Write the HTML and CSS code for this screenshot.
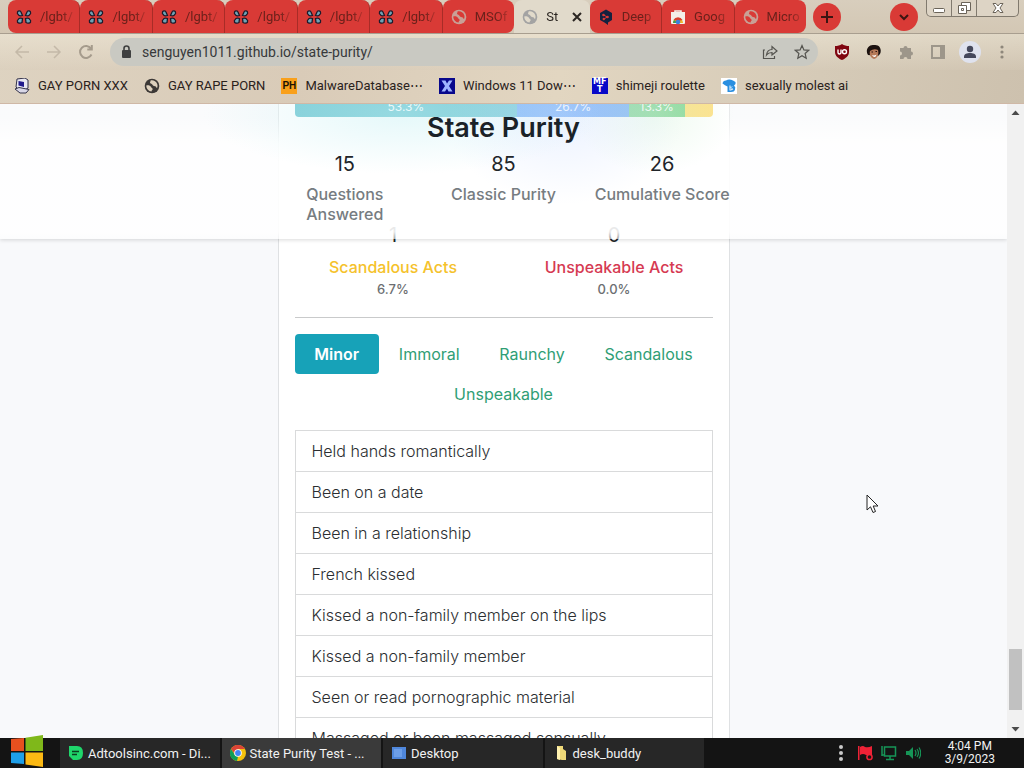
FILE: index.html
```html
<!DOCTYPE html>
<html lang="en">
<head>
<meta charset="utf-8">
<title>State Purity Test</title>
<link rel="stylesheet" href="styles.css">
</head>
<body>
<svg class="defs" aria-hidden="true">
  <symbol id="clover" viewBox="0 0 16 16">
    <g fill="#6fa3b5" stroke="#1d1a2b" stroke-width="1.300">
      <path d="M6.500 6.500Q3 7.500 2.200 5.500 1 4.800 1.500 3.500 1.300 2 3 2 4.500 1.500 5 3Z"/>
      <path d="M9.500 6.500Q13 7.500 13.800 5.500 15 4.800 14.500 3.500 14.700 2 13 2 11.500 1.500 11 3Z"/>
      <path d="M6.500 9.500Q3 8.500 2.200 10.500 1 11.200 1.500 12.500 1.300 14 3 14 4.500 14.500 6 13.500Z"/>
      <path d="M9.500 9.500Q13 8.500 13.800 10.500 15 11.200 14.500 12.500 14.700 14 13 14 11.500 14.500 10 13.500Z"/>
    </g>
  </symbol>
  <symbol id="globe" viewBox="0 0 16 16">
    <circle cx="8" cy="8" r="7.300" fill="currentColor"/>
    <path d="M2.300 7.500C4 7 6.500 7.500 7 9c.3 1 1.800.8 1.700 2.200-.2 1-1.200 1-1.200 2.300C4.500 13.200 2.300 10.800 2.300 7.500ZM6.500 2.500C9 1.800 12 3 13.200 6c.6 1.700.3 3-.2 4-.8-.2-.8-1.700-2-1.800-1.500 0-2-.7-2.700-1.700C7.800 5.500 6 5.700 6 4.500c0-.8.800-1 .5-2Z" fill="var(--land)"/>
  </symbol>
</svg>

<div class="chrome">
  <div class="strip">
    <div class="tabs">
      <button class="tab first"><svg class="ico"><use href="#clover"/></svg><span>/lgbt/</span></button>
      <button class="tab"><svg class="ico"><use href="#clover"/></svg><span>/lgbt/</span></button>
      <button class="tab"><svg class="ico"><use href="#clover"/></svg><span>/lgbt/</span></button>
      <button class="tab"><svg class="ico"><use href="#clover"/></svg><span>/lgbt/</span></button>
      <button class="tab"><svg class="ico"><use href="#clover"/></svg><span>/lgbt/</span></button>
      <button class="tab"><svg class="ico"><use href="#clover"/></svg><span>/lgbt/</span></button>
      <button class="tab last"><svg class="ico globe-red"><use href="#globe"/></svg><span>MSOf</span></button>
      <button class="tab active"><svg class="ico globe-light"><use href="#globe"/></svg><span>St</span><svg class="close" viewBox="0 0 10 10"><path d="M1 1l8 8M9 1L1 9" stroke="#2b2622" stroke-width="2"/></svg></button>
      <button class="tab first"><svg class="ico" viewBox="0 0 16 16"><path d="M8 .5l6 3.500v7l-4 2.500V16l-3.500-2.500L2 11V4Z" fill="#16213f"/><circle cx="5.500" cy="6" r="1.300" fill="#d93a36"/><circle cx="9.500" cy="8" r="1.300" fill="#d93a36"/><circle cx="5.800" cy="10" r="1.200" fill="#d93a36"/><path d="M5.500 6l4 2-3.700 2" stroke="#d93a36" fill="none"/></svg><span>Deep</span></button>
      <button class="tab"><svg class="ico" viewBox="0 0 16 16"><path d="M1 3h14v11q0 1-1 1H2q-1 0-1-1Z" fill="#f3efe9"/><path d="M5 4V2h6v2" fill="none" stroke="#f3efe9" stroke-width="1.600"/><path d="M3 14a5 5 0 0 1 10 0Z" fill="#f0b429"/><path d="M3.500 11A5 5 0 0 1 12.500 11L8 12Z" fill="#d9402f"/><path d="M3 14a5 5 0 0 1 1-3l4 3Z" fill="#3a9b56"/><circle cx="8" cy="13" r="2.300" fill="#3f7ddb"/></svg><span>Goog</span></button>
      <button class="tab last"><svg class="ico globe-red"><use href="#globe"/></svg><span>Micro</span></button>
    </div>
    <button class="round" aria-label="New tab"><svg viewBox="0 0 28 28"><path d="M14 8v12M8 14h12" stroke="#3c1512" stroke-width="2"/></svg></button>
    <button class="round search" aria-label="Search tabs"><svg viewBox="0 0 28 28"><path d="M10 12l4 4 4-4" stroke="#3c1512" stroke-width="2" fill="none"/></svg></button>
    <div class="winctl">
      <button aria-label="Minimize"><svg viewBox="0 0 24 16"><rect x="6.500" y="8.500" width="11" height="4" rx="1" fill="#fff" stroke="#6b6459"/></svg></button>
      <button aria-label="Restore"><svg viewBox="0 0 24 16"><g fill="#fff" stroke="#6b6459"><path d="M9.500 2.500h9v8h-9Z"/><path d="M6.500 5.500h8v8h-8Z"/><path d="M9.500 8.500h2v2h-2Z"/></g></svg></button>
      <button class="wide" aria-label="Close"><svg viewBox="0 0 24 16"><path d="M7 3.500h3L12 6l2-2.500h3L14 8l3 4.500h-3L12 10l-2 2.500H7L10 8Z" fill="#fff" stroke="#6b6459"/></svg></button>
    </div>
  </div>

  <div class="toolbar">
    <div class="nav">
      <button aria-label="Back"><svg class="ico" viewBox="0 0 16 16"><path d="M15 8H2M8 2L2 8l6 6" class="faint"/></svg></button>
      <button aria-label="Forward"><svg class="ico" viewBox="0 0 16 16"><path d="M1 8h13M8 2l6 6-6 6" class="faint"/></svg></button>
      <button aria-label="Reload"><svg class="ico" viewBox="0 0 16 16"><path d="M13.500 10.500A6 6 0 1 1 13 4.500M13.800 1v4.500H9.300" class="mid"/></svg></button>
    </div>
    <div class="omnibox">
      <svg class="ico" viewBox="0 0 16 16"><rect x="4" y="6" width="9" height="8" rx="1" fill="#3f4040"/><path d="M6 7V4.500a2.500 2.500 0 0 1 5 0V7" fill="none" stroke="#3f4040" stroke-width="1.600"/></svg>
      <input type="text" aria-label="Address" value="senguyen1011.github.io/state-purity/">
      <button aria-label="Share"><svg class="ico" viewBox="0 0 16 16"><path d="M3 6H1.500v8.500h11V12M4.500 11c.5-4 2.500-5.500 5.500-5.500V2.500L15 7l-5 4V8.500c-2.500 0-4 .5-5.500 2.500Z" class="dark"/></svg></button>
      <button aria-label="Bookmark this tab"><svg class="ico" viewBox="0 0 16 16"><path d="M8 1.500l1.900 4.400 4.800.4-3.600 3.200 1.100 4.700L8 11.700l-4.200 2.500 1.100-4.700L1.300 6.300l4.800-.4Z" class="dark"/></svg></button>
    </div>
    <div class="exts">
      <button aria-label="uBlock Origin"><svg class="ico" viewBox="0 0 16 16"><path d="M8 0c2 1.500 4.500 2 7 2v6c0 4-3.500 6.500-7 8-3.500-1.500-7-4-7-8V2c2.500 0 5-.5 7-2Z" fill="#800610"/><path d="M4 5.500v3a1.500 1.500 0 0 0 3 0v-3" fill="none" stroke="#fff" stroke-width="1.400"/><circle cx="10.500" cy="7.800" r="2" fill="none" stroke="#fff" stroke-width="1.400"/></svg></button>
      <button aria-label="Extension"><svg class="ico" viewBox="0 0 16 16"><path d="M2 11C-1 7 2 0 8 1c6-1 8 5 6 9l-2 2Z" fill="#1c1210"/><path d="M4 7q4-3 8-1c1 4 0 8-4 9-3-1-5-4-4-8Z" fill="#b67a58"/><path d="M6 11q2.500 1 4.500-.5-.5 2.500-2 2.500T6 11Z" fill="#fff"/><path d="M5.500 8h1.500M9.500 7.500H11" stroke="#2b1510"/></svg></button>
      <button aria-label="Extensions"><svg class="ico" viewBox="0 0 16 16"><path d="M2 4h3.500a2 2 0 1 1 4 0H13v3.500a2 2 0 1 1 0 4V15H9.500a2 2 0 0 0-4 0H2v-3.500a2 2 0 0 0 0-4Z" fill="#9d968a"/></svg></button>
      <button aria-label="Side panel"><svg class="ico" viewBox="0 0 16 16"><rect x="2" y="2" width="12" height="12" fill="none" stroke="#9d968a" stroke-width="2"/><path d="M10 2h4v12h-4Z" fill="#9d968a"/></svg></button>
      <button class="profile" aria-label="Profile"><svg class="ico" viewBox="0 0 16 16"><circle cx="8" cy="5" r="3.200" fill="#45485c"/><path d="M2 14v-1.500c0-2.500 3-3.500 6-3.500s6 1 6 3.500V14Z" fill="#45485c"/></svg></button>
      <button aria-label="Menu"><svg class="ico" viewBox="0 0 16 16"><g fill="#8e877b"><circle cx="8" cy="3" r="1.600"/><circle cx="8" cy="8" r="1.600"/><circle cx="8" cy="13" r="1.600"/></g></svg></button>
    </div>
  </div>

  <nav class="bookmarks" aria-label="Bookmarks">
    <a href="#"><svg class="ico" viewBox="0 0 16 16"><path d="M3 1l8-1 3 2v8l-3 2H5L2 9Z" fill="#e9e8f2" stroke="#33324a"/><path d="M4.500 3L10 4v5L4.500 7.500Z" fill="#211a8c"/><path d="M1 11l4-1.500 10 2-3 3.500H6Z" fill="#d9d7e6" stroke="#33324a"/></svg>GAY PORN XXX</a>
    <a href="#"><svg class="ico globe-dark"><use href="#globe"/></svg>GAY RAPE PORN</a>
    <a href="#"><span class="ico ph">PH</span>MalwareDatabase⋯</a>
    <a href="#"><svg class="ico" viewBox="0 0 16 16"><path d="M0 0h16v16H0Z" fill="#08088c"/><path d="M2.500 2.500h4L8 5.500l2-3h3.500L10 8l3.500 5.500h-4L8 10.500l-2 3H2.500L6 8Z" fill="#9fb4ff"/></svg>Windows 11 Dow⋯</a>
    <a href="#"><span class="ico mft"><span>MF</span><span>T</span></span>shimeji roulette</a>
    <a href="#"><svg class="ico" viewBox="0 0 16 16"><path d="M0 0h16v16H0Z" fill="#fff"/><path d="M1.500 5.500Q2 2.500 5 2.500 8 .500 12 2.500L14.500 4V6L13 7.500Q15 9 14 11.500 13.500 14 10 14H6.500V8.500Q4 7.500 1.500 5.500Z" fill="#2a8fe0"/><path d="M9 7.500v5M11 8.500q-2 1 0 2t-1.500 1.500" stroke="#fff" fill="none"/></svg>sexually molest ai</a>
  </nav>
</div>

<div class="viewport">
  <main class="page">
    <header class="summary">
      <h1>State Purity</h1>
      <div class="totals">
        <div><b>15</b><span>Questions Answered</span></div>
        <div><b>85</b><span>Classic Purity</span></div>
        <div><b>26</b><span>Cumulative Score</span></div>
      </div>
    </header>
    <section class="card">
      <div class="progress"><span class="minor">53.3%</span><span class="immoral">26.7%</span><span class="raunchy">13.3%</span><span class="scandalous"></span></div>
      <div class="acts">
        <div><b>1</b><span class="yellow">Scandalous Acts</span><small>6.7%</small></div>
        <div><b>0</b><span class="red">Unspeakable Acts</span><small>0.0%</small></div>
      </div>
      <hr>
      <div class="pills">
        <button class="on">Minor</button><button>Immoral</button><button>Raunchy</button><button>Scandalous</button><button>Unspeakable</button>
      </div>
      <ul class="list">
        <li>Held hands romantically</li>
        <li>Been on a date</li>
        <li>Been in a relationship</li>
        <li>French kissed</li>
        <li>Kissed a non-family member on the lips</li>
        <li>Kissed a non-family member</li>
        <li>Seen or read pornographic material</li>
        <li>Massaged or been massaged sensually</li>
      </ul>
    </section>
  </main>
  <div class="scrollbar">
    <svg viewBox="0 0 17 17"><path d="M4.500 11L8.500 6.500 12.500 11Z" fill="#4a4a4a"/></svg>
    <div class="track"><div class="thumb"></div></div>
    <svg viewBox="0 0 17 17"><path d="M4.500 6L8.500 10.500 12.500 6Z" fill="#4a4a4a"/></svg>
  </div>
</div>

<footer class="taskbar">
  <button class="start" aria-label="Start"><svg viewBox="0 0 34 32"><path d="M1 4l13-1v13H1Z" fill="#e8501f"/><path d="M15.500 2.800L33 0v16H15.500Z" fill="#7fb81a"/><path d="M1 17.500h13V29L1 28Z" fill="#1f9fe8"/><path d="M15.500 17.500H33V32l-17.500-2.500Z" fill="#fcb913"/></svg></button>
  <div class="tasks">
    <button><svg class="ico" viewBox="0 0 16 16"><path d="M1 1h8q6 0 6 7t-6 7H5l-4-4Z" fill="#1fd66b"/><path d="M4 6.500h7M4 9.500h5" stroke="#0c3f20" stroke-width="1.500"/></svg>Adtoolsinc.com - Di...</button>
    <button class="current"><svg class="ico" viewBox="0 0 16 16"><circle cx="8" cy="8" r="8" fill="#f4c20d"/><path d="M1 4a8 8 0 0 1 14 0H8L5 9Z" fill="#db4437"/><path d="M1 4l4 6 3 1.500L7 16A8 8 0 0 1 1 4Z" fill="#0f9d58"/><circle cx="8" cy="8" r="3.800" fill="#fff"/><circle cx="8" cy="8" r="2.900" fill="#4285f4"/></svg>State Purity Test - ...</button>
    <button><svg class="ico" viewBox="0 0 16 16"><path d="M1 2h14v12H1Z" fill="#4f87dc"/><path d="M3 4h8v8H3Z" fill="#6c9ee8"/></svg>Desktop</button>
    <button><svg class="ico" viewBox="0 0 16 16"><path d="M4 1h6v3l3 2v9H9l-5-1Z" fill="#efd978"/><path d="M4 1l3 2v12l-3-1Z" fill="#fff2b0"/></svg>desk_buddy</button>
  </div>
  <div class="tray">
    <svg class="ico" viewBox="0 0 16 16"><g fill="#c9c9c9"><circle cx="8" cy="2" r="2"/><circle cx="8" cy="8" r="2"/><circle cx="8" cy="14" r="2"/></g></svg>
    <svg class="ico" viewBox="0 0 16 16"><path d="M1 1h1.500v14H1ZM3 2q3-2 5 0 3 1 7-1v9H9Q6 8 3 10Z" fill="#ee2236"/><circle cx="12.500" cy="12" r="2.600" fill="#171717" stroke="#ee2236" stroke-width="1.500"/></svg>
    <svg class="ico" viewBox="0 0 16 16"><path d="M3.500 2h11v9h-11ZM9 11v3M5 14.500h8M1 1v10M1 10h2" fill="none" stroke="#169557" stroke-width="1.500"/></svg>
    <svg class="ico" viewBox="0 0 16 16"><path d="M1 6h3l4-4v12l-4-4H1Z" fill="#169557"/><path d="M10 5q2 3 0 6M12 4q3 4 0 8M14 2.500q3.500 5.500 0 11" fill="none" stroke="#169557" stroke-width="1.200"/></svg>
    <div class="clock"><span>4:04 PM</span><span>3/9/2023</span></div>
  </div>
</footer>
<svg class="cursor" viewBox="0 0 13 20" aria-hidden="true"><path d="M1 1v15l3.500-3.200L7 18.500l2.500-1L7.200 12H12Z" fill="#fff" stroke="#222"/></svg>
</body>
</html>
```
FILE: styles.css
```css
* { box-sizing: border-box; }
body { margin: 0; height: 100vh; display: flex; flex-direction: column; overflow: hidden; font-family: Roboto, "Liberation Sans", sans-serif; font-size: 13px; color: #2a221c; }
button { font: inherit; color: inherit; background: none; border: 0; padding: 0; }
a { color: inherit; text-decoration: none; }
svg { display: block; flex: none; }
.defs { position: absolute; width: 0; height: 0; }
.ico { width: 16px; height: 16px; flex: none; }

.chrome { flex: none; background: linear-gradient(100deg, #ded3c1 0%, #d9cbb8 30%, #e2d6c1 55%, #d5cab7 80%, #cdc1ae 100%); border-bottom: 1px solid #cfb8a6; }
.strip { display: flex; height: 34px; padding-left: 8px; border-bottom: 1px solid #a89e8f; background: linear-gradient(#d8cebd, #d3c7b4); }
.tabs { display: flex; flex: 1; max-width: 798px; min-width: 0; }
.tab { flex: 1; min-width: 0; display: flex; align-items: center; gap: 8px; padding: 0 4px 0 8px; background: #d93a36; color: #6b211b; border-right: 1px solid #a82c27; border-radius: 8px 8px 0 0; overflow: hidden; white-space: nowrap; }
.tab span { overflow: hidden; flex: 1; text-align: left; mask-image: linear-gradient(90deg, #000 60%, rgba(0, 0, 0, .2)); }
.tab.first { border-bottom-left-radius: 8px; }
.tab.last { border-bottom-right-radius: 8px; border-right: 0; }
.tab.active { padding-right: 8px; background: #e1dacb; color: #2b2622; border: 0; }
.close { width: 10px; height: 10px; }
.globe-red { color: #c9a096; --land: #d93a36; }
.globe-light { color: #a3a3a3; --land: #e1dacb; }
.globe-dark { color: #3c3836; --land: #ddd0bd; }
.round { flex: none; width: 28px; height: 28px; margin: 3px 0 0 7px; border-radius: 50%; background: #d93a36; }
.search { margin-left: auto; margin-right: 8px; }
.winctl { display: flex; flex: none; height: 17px; margin-right: 5px; border: 1px solid #817a6e; border-top: 0; border-radius: 0 0 5px 5px; background: #ddd4c5; }
.winctl button { width: 25px; border-right: 1px solid #817a6e; }
.winctl .wide { width: 41px; border: 0; display: flex; justify-content: center; }
.winctl svg { width: 24px; height: 16px; }

.toolbar { display: flex; align-items: center; height: 36px; gap: 16px; padding: 0 14px; background: linear-gradient(rgba(237, 230, 213, .6), rgba(215, 203, 185, .3)); }
.nav, .exts { display: flex; gap: 16px; flex: none; }
.faint, .mid, .dark { fill: none; stroke: #c4b9a8; stroke-width: 1.500; }
.mid { stroke: #a59b8c; stroke-width: 2; }
.dark { stroke: #55544f; stroke-width: 1.200; }
.omnibox { flex: 1; display: flex; align-items: center; gap: 16px; height: 28px; padding: 0 8px; border-radius: 14px; background: #c9c9c2; }
.omnibox input { flex: 1; min-width: 0; margin-left: -8px; padding: 0; border: 0; background: none; font: 14px Roboto, sans-serif; color: #37393b; }
.profile { border-radius: 50%; background: #dfe2ee; box-shadow: 0 0 0 3px #dfe2ee; }
.bookmarks { display: flex; align-items: center; gap: 16px; height: 33px; padding: 0 14px 2px; white-space: nowrap; }
.bookmarks a { display: flex; align-items: center; gap: 8px; }
.ph { background: #f9a01b; color: #1c1305; font: bold 10px/16px "Liberation Sans", sans-serif; text-align: center; }
.mft { display: flex; flex-direction: column; align-items: center; background: #0808c8; color: #fff; font: bold 8px/8px "DejaVu Sans", sans-serif; }

.viewport { flex: 1; min-height: 0; display: flex; }
.page { position: relative; flex: 1; overflow: hidden; background: #f8f9fb; font-family: Inter, "Open Sans", sans-serif; font-size: 16px; line-height: 24px; color: #212529; }
.summary { position: absolute; inset: 0 0 auto; height: 135px; z-index: 1; text-align: center; background: radial-gradient(200px 60px at 40% 10px, rgba(190, 238, 242, .4), transparent), radial-gradient(120px 90px at 56% 10px, rgba(206, 222, 255, .4), transparent), radial-gradient(80px 60px at 65% 10px, rgba(200, 240, 205, .3), transparent), linear-gradient(rgba(255, 255, 255, .3) 12px, rgba(255, 255, 255, .9) 40px, rgba(255, 255, 255, .9) 128px, rgba(255, 255, 255, .6)); box-shadow: 0 1px 4px rgba(0, 0, 0, .15); }
.summary h1 { margin: 8px 0 4px; font-size: 27px; line-height: 32px; font-weight: 600; color: #1a2228; }
.totals { display: grid; grid-template-columns: repeat(3, 1fr); max-width: 476px; margin: 0 auto; line-height: 20px; }
.totals div { padding: 6px 8px 0; }
.totals b, .acts b { display: block; font-size: 20px; font-weight: 400; }
.totals b { margin-bottom: 10px; }
.totals span { display: block; font-weight: 500; color: #767c81; }
.card { max-width: 452px; margin: 0 auto; padding: 0 16px; background: #fff; border: 1px solid #dfe1e3; border-width: 0 1px; }
.progress { display: flex; height: 13px; overflow: hidden; border-radius: 0 0 4px 4px; font-size: 12px; line-height: 6px; text-align: center; color: #fff; }
.minor { flex: 533; background: #45b6c4; }
.immoral { flex: 267; background: #4a94f5; }
.raunchy { flex: 133; background: #5cc873; }
.scandalous { flex: 67; background: #ffd65a; }
.acts { display: grid; grid-template-columns: 1fr 1fr; margin: 102px -12px 0; text-align: center; }
.acts b { line-height: 32px; margin-bottom: 4px; }
.acts span { display: block; font-weight: 500; }
.acts small { display: block; font-size: 13px; line-height: 20px; font-weight: 500; color: #6c6f72; }
.yellow { color: #f5c22c; }
.red { color: #d63a52; }
hr { margin: 18px 0 16px; border: 0; border-top: 1px solid #c9cacb; }
.pills { display: flex; flex-wrap: wrap; }
.pills button { flex: 1 1 auto; padding: 8px 16px; color: #2f9e75; border-radius: 4px; line-height: 24px; }
.pills .on { background: #17a2b8; color: #fff; font-weight: 600; }
.list { margin: 16px 0 0; padding: 0; list-style: none; border: 1px solid #d9dadb; }
.list li { height: 41px; padding: 8px 16px; border-bottom: 1px solid #d9dadb; font-weight: 300; color: #2b2e31; }
.scrollbar { width: 17px; display: flex; flex-direction: column; background: #f1f1f1; }
.scrollbar svg { width: 17px; height: 17px; }
.track { flex: 1; display: flex; flex-direction: column; justify-content: flex-end; padding: 0 2px 11px; }
.thumb { height: 61px; background: #c1c1c1; }

.taskbar { position: relative; z-index: 2; flex: none; display: flex; align-items: center; height: 30px; background: #141414; color: #f2f2f2; }
.start { flex: none; width: 60px; padding-left: 10px; margin-top: -4px; }
.start svg { width: 34px; height: 32px; }
.tasks { flex: 1; display: flex; gap: 2px; height: 100%; max-width: 644px; }
.tasks button { flex: 1; display: flex; align-items: center; gap: 4px; padding-left: 8px; background: #272727; white-space: nowrap; font-size: 13px; }
.tasks .current { background: #3a3a3a; }
.tray { margin-left: auto; display: flex; align-items: center; gap: 8px; padding-right: 29px; }
.clock { display: flex; flex-direction: column; align-items: center; margin-left: 16px; font-size: 12px; line-height: 13px; }
.cursor { position: absolute; left: 866px; top: 494px; width: 13px; height: 20px; z-index: 3; }
```
